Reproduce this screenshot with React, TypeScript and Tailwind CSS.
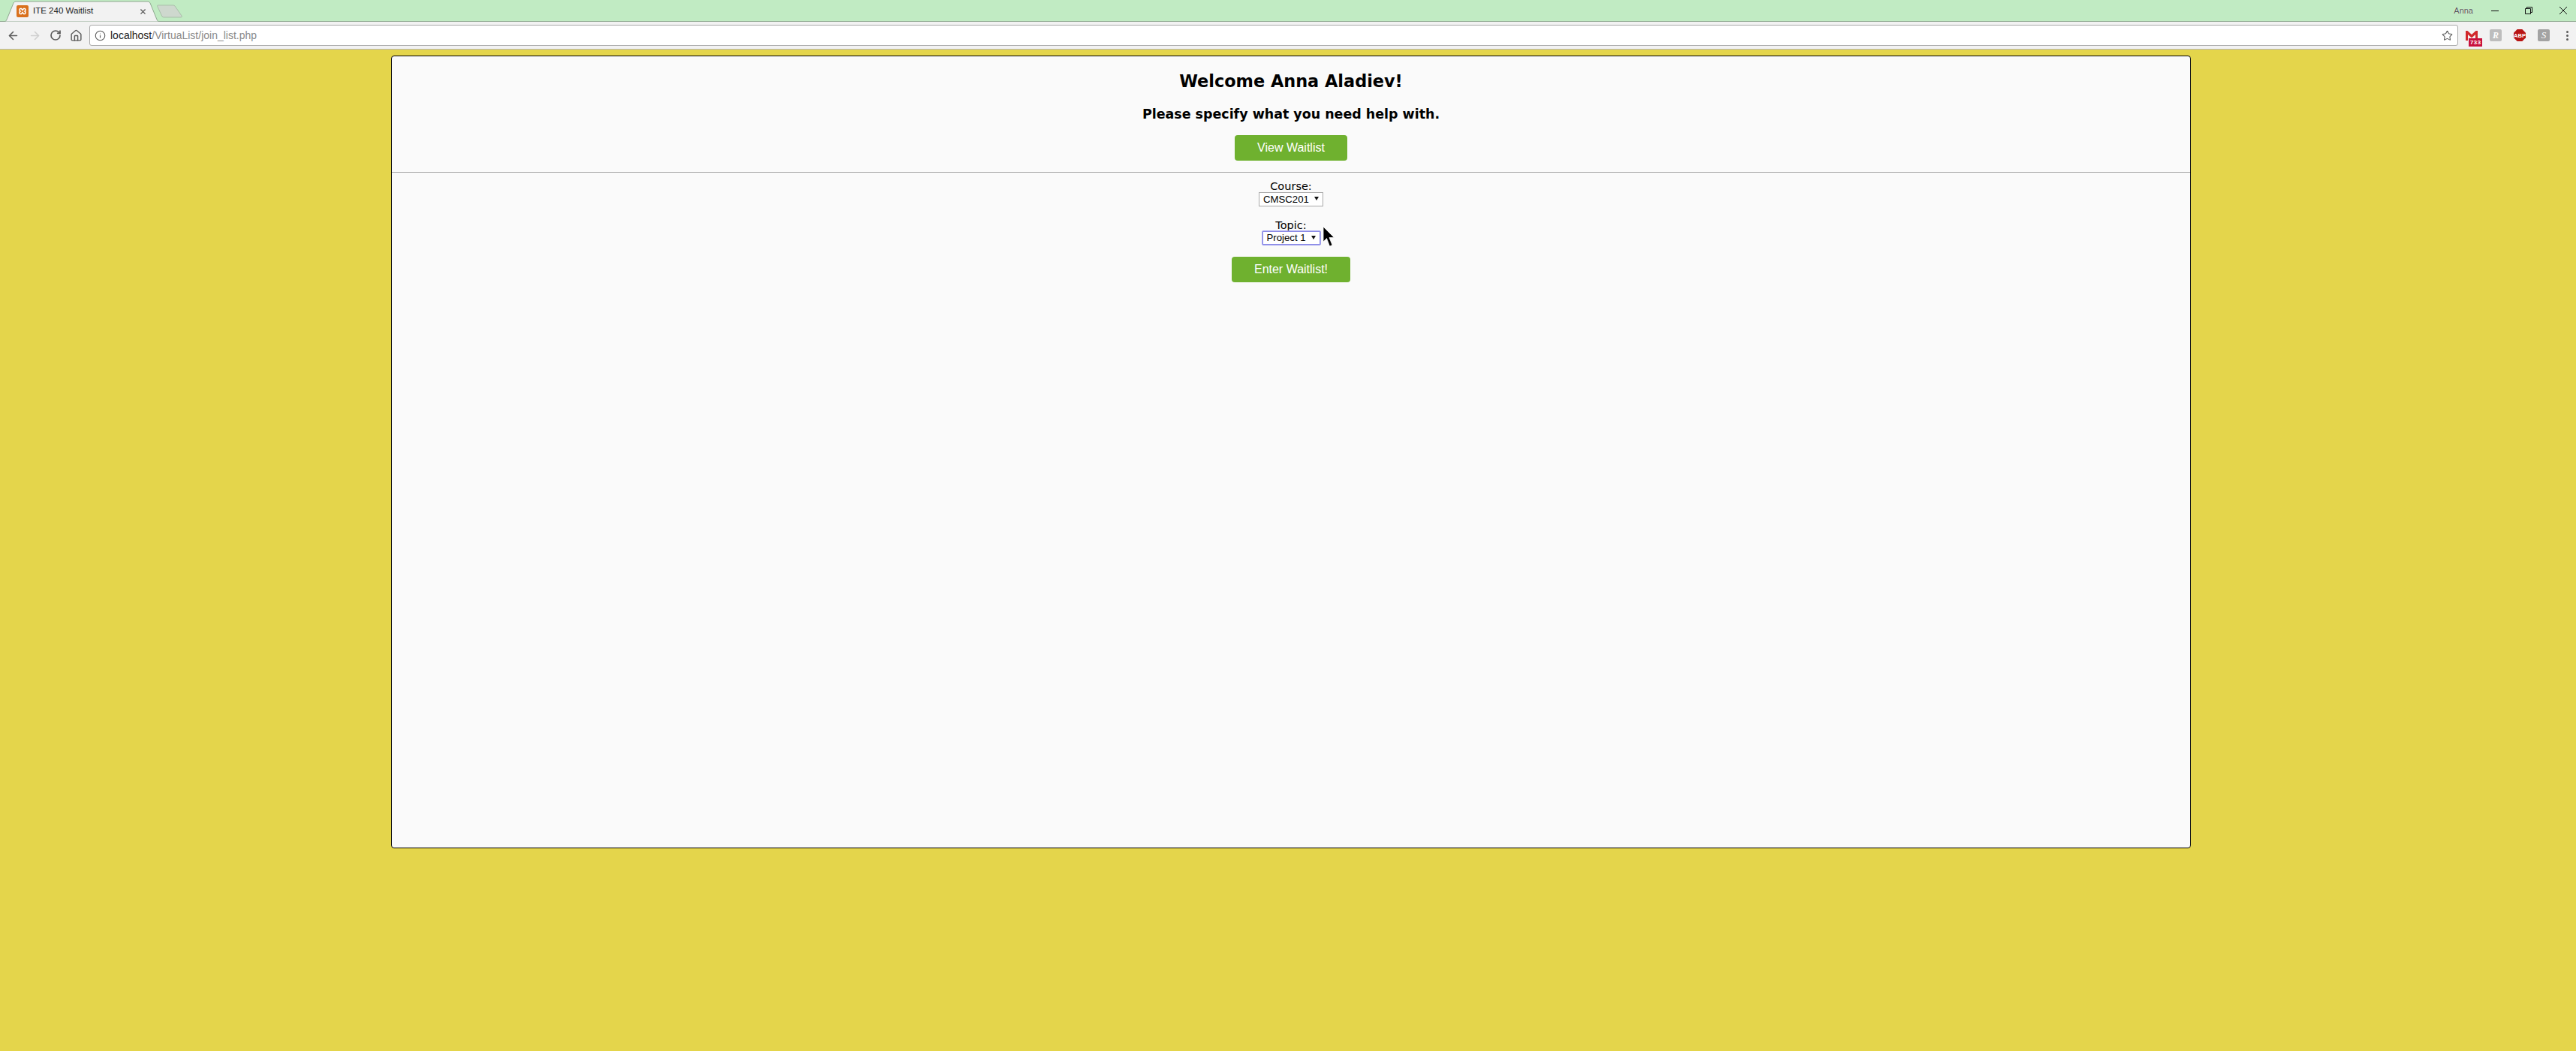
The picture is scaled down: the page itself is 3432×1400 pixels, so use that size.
import { ArrowLeft, ArrowRight, Home, Info, RotateCw, Star, X } from 'lucide-react';

function FormSelect({ value, focused, width }: { value: string; focused?: boolean; width: string }) {
    return (
        <div className={`relative ${width} ${focused ? 'h-[18px] outline outline-1 outline-[#a5a5ee] rounded-[1px]' : 'h-[19px]'}`}>
            <select
                defaultValue={value}
                className={`block appearance-none w-full h-full bg-white pl-[5px] text-[13.200px] leading-none text-black font-['Liberation_Sans',sans-serif] outline-none ${focused ? 'border border-[#8a8ae6]' : 'border border-[#a9a9a9]'}`}
            >
                <option>{value}</option>
            </select>
            <svg className="absolute right-[6px] top-[6px] pointer-events-none" width="6" height="5" viewBox="0 0 6 5">
                <path d="M0 0h6L3 5z" fill="#111" />
            </svg>
        </div>
    );
}

function GreenButton({ label, width }: { label: string; width: string }) {
    return (
        <button className={`${width} h-[34px] bg-[#6fb12f] rounded-[4px] text-white text-[16px] font-['Liberation_Sans',sans-serif]`}>
            {label}
        </button>
    );
}

function XamppIcon() {
    return (
        <svg width="16" height="16" viewBox="0 0 16 16">
            <rect width="16" height="16" rx="2" fill="#d9701c" />
            <path d="M5 4.500h1.500L8 6.500 9.500 4.500H11a2 2 0 0 1 0 3.500 2 2 0 0 1 0 3.500H9.500L8 9.500 6.500 11.500H5a2 2 0 0 1 0-3.500 2 2 0 0 1 0-3.500z" fill="none" stroke="#fff" strokeWidth="1.500" />
        </svg>
    );
}

function ExtensionIcons() {
    return (
        <div className="flex items-center shrink-0">
            {/* gmail */}
            <div className="relative w-[22px] h-[22px] ml-[10px] mt-[9px]">
                <svg className="absolute left-0 top-0" width="16" height="13" viewBox="0 0 16 13">
                    <path d="M0 0h2.500L8 5 13.500 0H16v13H13V5L8 9.500 3 5v8H0z" fill="#d1282b" />
                </svg>
                <div className="absolute left-[4px] top-[10px] w-[18px] h-[11px] bg-[#c8103c] text-white text-[8px] leading-[11px] text-center font-['Liberation_Mono',monospace] font-bold">733</div>
            </div>
            {/* reader */}
            <div className="ml-[10px] w-4 h-4 rounded-[2px] bg-[#bdbdbd] text-white text-[12px] leading-4 text-center font-['Liberation_Serif',serif] italic font-bold">
                R
            </div>
            {/* adblock plus */}
            <svg className="ml-4" width="16" height="16" viewBox="0 0 16 16">
                <path d="M4.700 0h6.600L16 4.700v6.600L11.300 16H4.700L0 11.300V4.700z" fill="#b81414" />
                <text x="8" y="10.500" textAnchor="middle" fontSize="7.500" fontWeight="700" fill="#fff" fontFamily="Liberation Sans, sans-serif">ABP</text>
            </svg>
            {/* stylish */}
            <div className="ml-4 w-4 h-4 rounded-[2px] bg-[#a3a3a3] text-white text-[13px] leading-4 text-center font-['Liberation_Serif',serif] italic">
                S
            </div>
            {/* kebab */}
            <div className="ml-[22px] flex flex-col gap-[2px]">
                <div className="w-[3px] h-[3px] rounded-full bg-[#5a5a5a]" />
                <div className="w-[3px] h-[3px] rounded-full bg-[#5a5a5a]" />
                <div className="w-[3px] h-[3px] rounded-full bg-[#5a5a5a]" />
            </div>
        </div>
    );
}

export default function App() {
    return (
        <div className="relative min-h-[1400px] bg-[#e4d54b] overflow-hidden font-['DejaVu_Sans',sans-serif] text-black">
            {/* Tab strip */}
            <div className="h-[29px] bg-[#c1ebc3] border-b border-[#8fa890] flex items-end justify-between">
                <div className="flex items-end">
                    <div className="relative w-[206px] h-[28px] ml-[6px] -mb-px flex items-center pl-[16px] pr-[16px]">
                        <svg className="absolute inset-0" width="206" height="28" viewBox="0 0 206 28">
                            <path d="M0 28C1 28 2 27 3 25L12 3Q13 1 15 1H191Q193 1 194 3L203 25C204 27 205 28 206 28z" fill="#f2f2f2" stroke="#8fa890" />
                        </svg>
                        <div className="relative flex items-center w-full">
                            <XamppIcon />
                            <span className="ml-[6px] text-[11.500px] font-['Liberation_Sans',sans-serif] text-[#222] flex-1">ITE 240 Waitlist</span>
                            <X size={11} strokeWidth={2.500} className="text-[#5a5a5a]" />
                        </div>
                    </div>
                    <svg className="-ml-[3px] mb-[4px]" width="34" height="18" viewBox="0 0 34 18">
                        <path d="M1 1H22Q23 1 24 2L33 15Q34 17 32 17H9Q8 17 7 16L1 3Q0 1 1 1z" fill="#ced8ce" stroke="#a9bfa9" />
                    </svg>
                </div>
                <div className="flex items-center h-[28px] pr-[12px]">
                    <span className="text-[11px] font-['Liberation_Sans',sans-serif] text-[#555] [text-shadow:0_0_1px_#fff] mr-[24px]">Anna</span>
                    <svg className="mr-[35px]" width="10" height="1" viewBox="0 0 10 1">
                        <path d="M0 .5h10" stroke="#111" />
                    </svg>
                    <svg className="mr-[36px]" width="10" height="10" viewBox="0 0 10 10">
                        <path d="M.5 2.500h7v7h-7zM2.500 2.500v-2h7v7h-2" fill="none" stroke="#111" />
                    </svg>
                    <svg width="10" height="10" viewBox="0 0 10 10">
                        <path d="M0 0l10 10M10 0L0 10" stroke="#111" fill="none" />
                    </svg>
                </div>
            </div>

            {/* Toolbar */}
            <div className="h-[37px] bg-[#f2f2f2] border-b border-[#b5b5b5] flex items-center">
                <ArrowLeft size={17} strokeWidth={2.250} className="ml-[9px] text-[#5a5a5a] shrink-0" />
                <ArrowRight size={17} strokeWidth={2.250} className="ml-[12px] text-[#cfcfcf] shrink-0" />
                <RotateCw size={16} strokeWidth={2.500} className="ml-[11px] text-[#5a5a5a] shrink-0" />
                <Home size={17} strokeWidth={2} className="ml-[11px] text-[#5a5a5a] shrink-0" />
                <div className="ml-[9px] w-[3156px] shrink-0 h-[28px] bg-white border border-[#a9a9a9] rounded-[3px] flex items-center pl-[6px] pr-[6px]">
                    <Info size={15} strokeWidth={1.750} className="text-[#5a5a5a]" />
                    <span className="ml-[6px] text-[14px] font-['Liberation_Sans',sans-serif] text-[#8a8a8a]">
                        <span className="text-[#222]">localhost</span>/VirtuaList/join_list.php
                    </span>
                    <Star size={15} strokeWidth={1.750} className="ml-auto text-[#5a5a5a]" />
                </div>
                <ExtensionIcons />
            </div>

            {/* Card */}
            <div className="mt-[8px] ml-[521px] w-[2398px] h-[1056px] bg-[#fafafa] border border-black rounded-[4px]">
                <div className="h-[155px] border-b border-[#a8a8a8] flex flex-col items-center">
                    <h1 className="mt-[20px] text-[22.400px] leading-[26px] font-bold">Welcome Anna Aladiev!</h1>
                    <p className="mt-[21px] text-[17.450px] leading-[20px] font-bold">Please specify what you need help with.</p>
                    <div className="mt-[18px]">
                        <GreenButton label="View Waitlist" width="w-[150px]" />
                    </div>
                </div>
                <div className="flex flex-col items-center">
                    <label className="mt-[10px] text-[14.500px] leading-[16px]">Course:</label>
                    <FormSelect value="CMSC201" width="w-[86px]" />
                    <label className="mt-[17px] text-[14.500px] leading-[16px]">Topic:</label>
                    <FormSelect value="Project 1" width="w-[77px]" focused />
                    <div className="mt-[16px]">
                        <GreenButton label="Enter Waitlist!" width="w-[158px]" />
                    </div>
                </div>
            </div>

            {/* Mouse cursor */}
            <svg className="absolute left-[1762px] top-[301px]" width="16" height="28" viewBox="0 0 16 28">
                <path d="M1 1V21L5.500 16.500 9.500 27 13 25.500 9 15.500H15.500z" fill="#000" stroke="#fff" strokeWidth="0.750" />
            </svg>
        </div>
    );
}
